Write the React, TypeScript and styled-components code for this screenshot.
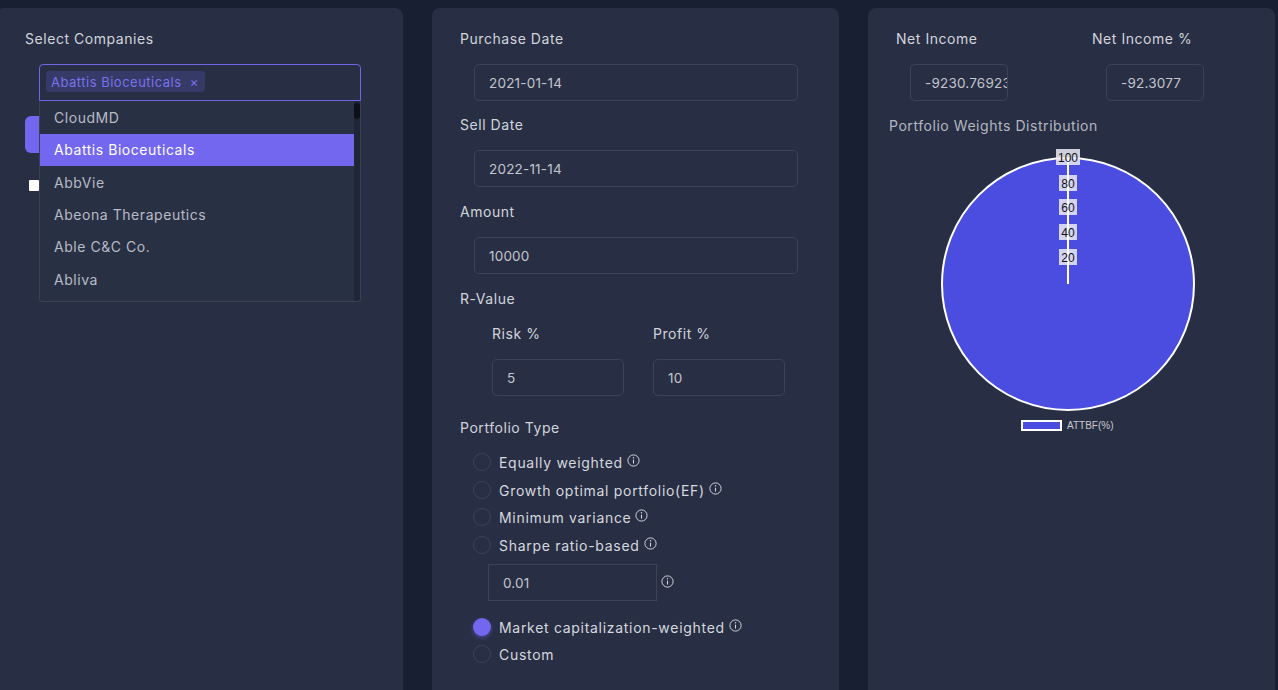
import React from "react";
import styled, { createGlobalStyle, css } from "styled-components";

const GlobalStyle = createGlobalStyle`
  html, body { margin: 0; padding: 0; }
  body {
    background: #181f32;
    font-family: Inter, "Open Sans", sans-serif;
    overflow: hidden;
  }
`;

const Page = styled.div`
  display: flex;
  gap: 29px;
  padding-top: 8px;
  margin-left: -4px;
  height: 682px;
  overflow: hidden;
`;

const Panel = styled.section<{ $pl?: number }>`
  flex: none;
  width: 407px;
  min-height: 720px;
  box-sizing: border-box;
  background: #282f44;
  border-radius: 8px;
  padding: 21px 0 0 ${(p) => p.$pl ?? 28}px;
  display: flex;
  flex-direction: column;
  position: relative;
`;

const Label = styled.div<{ $mt?: number; $dim?: boolean }>`
  font-size: 14px;
  line-height: 20px;
  font-weight: 400;
  letter-spacing: 0.55px;
  color: ${(p) => (p.$dim ? "#b4b7c1" : "#d2d4db")};
  margin-top: ${(p) => p.$mt ?? 0}px;
  white-space: nowrap;
`;

const Input = styled.div<{ $w?: number; $ml?: number; $mt?: number; $square?: boolean }>`
  box-sizing: border-box;
  width: ${(p) => p.$w ?? 324}px;
  height: 37px;
  margin-left: ${(p) => p.$ml ?? 14}px;
  margin-top: ${(p) => p.$mt ?? 15}px;
  border: 1px solid #3c4356;
  border-radius: ${(p) => (p.$square ? 0 : 5)}px;
  padding: 0 14px;
  display: flex;
  align-items: center;
  font-size: 13.5px;
  letter-spacing: 0.2px;
  color: #c3c5cd;
  white-space: nowrap;
  overflow: hidden;
  flex: none;
`;

/* ---------- left panel ---------- */
const SelectWrap = styled.div`
  position: relative;
  margin-left: 14px;
  margin-top: 15px;
  width: 322px;
`;

const SelectBox = styled.div`
  box-sizing: border-box;
  height: 37px;
  border: 1px solid #6f66e6;
  border-radius: 4px 4px 0 0;
  padding: 6px;
  display: flex;
  align-items: flex-start;
`;

const Chip = styled.span`
  height: 21px;
  display: inline-flex;
  align-items: center;
  gap: 8px;
  padding: 0 6px 0 5px;
  background: #363a67;
  border-radius: 3px;
  color: #7b71ee;
  font-size: 13px;
  letter-spacing: 0.5px;
`;

const DropList = styled.div`
  position: absolute;
  top: 37px;
  left: 0;
  width: 322px;
  height: 201px;
  box-sizing: border-box;
  border: 1px solid #3b4256;
  border-top: none;
  border-radius: 0 0 4px 4px;
  background: #283044;
  display: flex;
  overflow: hidden;
  z-index: 2;
`;

const Options = styled.div`
  flex: 1;
  display: flex;
  flex-direction: column;
  padding-top: 0.5px;
`;

const Option = styled.div<{ $active?: boolean }>`
  height: 32.3px;
  flex: none;
  display: flex;
  align-items: center;
  padding-left: 14px;
  font-size: 14px;
  letter-spacing: 0.55px;
  color: #b9bbc4;
  ${(p) =>
    p.$active &&
    css`
      background: #7367f0;
      color: #ffffff;
    `}
`;

const ScrollTrack = styled.div`
  width: 6px;
  flex: none;
  background: #1f2637;
  position: relative;
`;

const ScrollThumb = styled.div`
  position: absolute;
  top: 2px;
  left: 0;
  width: 6px;
  height: 16px;
  border-radius: 3px;
  background: #0d1018;
`;

const HiddenButton = styled.div`
  margin-top: 15px;
  width: 140px;
  height: 37px;
  border-radius: 6px;
  background: #7367f0;
  flex: none;
`;

const CheckBox = styled.div`
  margin-top: 27px;
  margin-left: 4px;
  width: 10px;
  height: 11px;
  background: #ffffff;
  border-radius: 1px;
  flex: none;
`;

/* ---------- middle panel ---------- */
const Row = styled.div<{ $ml?: number; $gap?: number; $mt?: number }>`
  display: flex;
  gap: ${(p) => p.$gap ?? 29}px;
  margin-left: ${(p) => p.$ml ?? 0}px;
  margin-top: ${(p) => p.$mt ?? 0}px;
`;

const Col = styled.div<{ $w?: number; $pl?: number }>`
  display: flex;
  flex-direction: column;
  flex: none;
  width: ${(p) => (p.$w ? `${p.$w}px` : "auto")};
  padding-left: ${(p) => p.$pl ?? 0}px;
  box-sizing: border-box;
`;

const RadioList = styled.div`
  display: flex;
  flex-direction: column;
  margin-left: 13px;
  margin-top: 14px;
`;

const RadioRow = styled.div<{ $mt?: number }>`
  display: flex;
  align-items: center;
  height: 20px;
  margin-top: ${(p) => p.$mt ?? 8}px;
  font-size: 14px;
  letter-spacing: 0.7px;
  color: #d6d8df;
`;

const Radio = styled.span<{ $checked?: boolean }>`
  width: 18px;
  height: 18px;
  box-sizing: border-box;
  border-radius: 50%;
  border: 1px solid #3c4356;
  margin-right: 8px;
  flex: none;
  ${(p) =>
    p.$checked &&
    css`
      border: none;
      background: #7367f0;
      box-shadow: 0 2px 4px rgba(115, 103, 240, 0.45);
    `}
`;

const InfoWrap = styled.span`
  display: inline-flex;
  margin-left: 4px;
  margin-top: -3px;
`;

const SharpeRow = styled.div`
  display: flex;
  align-items: center;
  margin-left: 15px;
  margin-top: 9px;
`;

/* ---------- right panel ---------- */
const ChartWrap = styled.div`
  margin-top: 9px;
  margin-left: 44px;
`;

const Info = () => (
  <InfoWrap>
    <svg width="13" height="13" viewBox="0 0 13 13" fill="none">
      <circle cx="6.5" cy="6.5" r="5.6" stroke="#d0d2d9" strokeWidth="1" />
      <line x1="6.5" y1="5.6" x2="6.5" y2="9.6" stroke="#d0d2d9" strokeWidth="1.1" />
      <circle cx="6.5" cy="3.8" r="0.75" fill="#d0d2d9" />
    </svg>
  </InfoWrap>
);

const ticks = [
  { v: "100", y: 12, w: 24 },
  { v: "80", y: 38, w: 18 },
  { v: "60", y: 62, w: 18 },
  { v: "40", y: 87, w: 18 },
  { v: "20", y: 112, w: 18 },
];

const PieChart = () => (
  <svg width="270" height="292" viewBox="0 0 270 292">
    <circle cx="135" cy="139" r="126" fill="#4b4de0" stroke="#ffffff" strokeWidth="2" />
    {ticks.map((t) => (
      <rect key={"b" + t.v} x={135 - t.w / 2} y={t.y - 8} width={t.w} height={16} fill="rgba(235,235,245,0.85)" />
    ))}
    <line x1="135" y1="139" x2="135" y2="13" stroke="#ffffff" strokeWidth="2" />
    {ticks.map((t) => (
      <text
        key={t.v}
        x="135"
        y={t.y + 4.5}
        textAnchor="middle"
        fontFamily="'Liberation Sans', Arial, sans-serif"
        fontSize="12"
        fill="#111"
      >
        {t.v}
      </text>
    ))}
    <rect x="89" y="276" width="39" height="9" fill="#4b4de0" stroke="#ffffff" strokeWidth="2" />
    <text x="134" y="283.5" fontFamily="'Liberation Sans', Arial, sans-serif" fontSize="10" fill="#c8c8cc">
      ATTBF(%)
    </text>
  </svg>
);

const companies = ["CloudMD", "Abattis Bioceuticals", "AbbVie", "Abeona Therapeutics", "Able C&C Co.", "Abliva"];

export default function App() {
  return (
    <>
      <GlobalStyle />
      <Page>
        <Panel $pl={29}>
          <Label>Select Companies</Label>
          <SelectWrap>
            <SelectBox>
              <Chip>
                Abattis Bioceuticals <span>×</span>
              </Chip>
            </SelectBox>
            <DropList>
              <Options>
                {companies.map((c) => (
                  <Option key={c} $active={c === "Abattis Bioceuticals"}>
                    {c}
                  </Option>
                ))}
              </Options>
              <ScrollTrack>
                <ScrollThumb />
              </ScrollTrack>
            </DropList>
          </SelectWrap>
          <HiddenButton />
          <CheckBox />
        </Panel>

        <Panel>
          <Label>Purchase Date</Label>
          <Input>2021-01-14</Input>
          <Label $mt={14}>Sell Date</Label>
          <Input>2022-11-14</Input>
          <Label $mt={15}>Amount</Label>
          <Input>10000</Input>
          <Label $mt={15}>R-Value</Label>
          <Row $ml={32} $mt={15}>
            <Col>
              <Label>Risk %</Label>
              <Input $w={132} $ml={0}>5</Input>
            </Col>
            <Col>
              <Label>Profit %</Label>
              <Input $w={132} $ml={0}>10</Input>
            </Col>
          </Row>
          <Label $mt={22}>Portfolio Type</Label>
          <RadioList>
            <RadioRow $mt={0}>
              <Radio />
              Equally weighted
              <Info />
            </RadioRow>
            <RadioRow>
              <Radio />
              Growth optimal portfolio(EF)
              <Info />
            </RadioRow>
            <RadioRow $mt={7}>
              <Radio />
              Minimum variance
              <Info />
            </RadioRow>
            <RadioRow>
              <Radio />
              Sharpe ratio-based
              <Info />
            </RadioRow>
            <SharpeRow>
              <Input $w={169} $ml={0} $mt={0} $square>
                0.01
              </Input>
              <Info />
            </SharpeRow>
            <RadioRow $mt={16}>
              <Radio $checked />
              Market capitalization-weighted
              <Info />
            </RadioRow>
            <RadioRow $mt={7}>
              <Radio />
              Custom
            </RadioRow>
          </RadioList>
        </Panel>

        <Panel $pl={21}>
          <Row $gap={0}>
            <Col $w={196} $pl={7}>
              <Label>Net Income</Label>
              <Input $w={98} $ml={14}>-9230.7692308</Input>
            </Col>
            <Col $w={196} $pl={7}>
              <Label>Net Income %</Label>
              <Input $w={98} $ml={14}>-92.3077</Input>
            </Col>
          </Row>
          <Label $mt={15} $dim>
            Portfolio Weights Distribution
          </Label>
          <ChartWrap>
            <PieChart />
          </ChartWrap>
        </Panel>
      </Page>
    </>
  );
}
